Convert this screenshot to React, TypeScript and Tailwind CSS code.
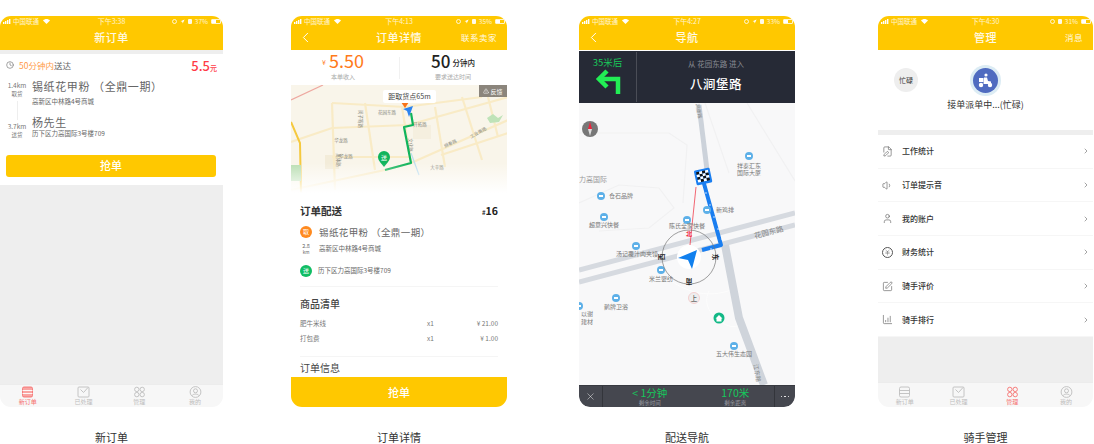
import { ChevronLeft, ChevronRight, FilePen, Volume1, User, JapaneseYen, SquarePen, ChartColumnIncreasing, X, Navigation, TriangleAlert, Clock } from 'lucide-react';

const FONT = { fontFamily: '"Noto Sans CJK SC", "Liberation Sans", sans-serif' };

function StatusBar({ time, battery, nav = true }: { time: string; battery: string; nav?: boolean }) {
  return (
    <div className="relative flex items-center justify-between h-[11px] pl-[3px] pr-[2px] text-[6.5px] leading-none text-white/80">
      <div className="flex items-center gap-[2px]">
        <svg width="8" height="5" viewBox="0 0 8 5" fill="#fff">
          <rect x="0" y="3" width="1.4" height="2" />
          <rect x="2" y="2" width="1.4" height="3" />
          <rect x="4" y="1" width="1.4" height="4" />
          <rect x="6" y="0" width="1.4" height="5" />
        </svg>
        <span>中国联通</span>
        <svg width="7" height="5" viewBox="0 0 7 5" className="ml-[2px]" fill="#fff">
          <path d="M0 1.6C2 -.4 5 -.4 7 1.6L3.5 5z" />
        </svg>
      </div>
      <span className="absolute left-0 right-0 text-center text-[7px]">{time}</span>
      <div className="flex items-center gap-[3px]">
        <span className="w-[5px] h-[5px] rounded-full border border-white/80" />
        {nav && <Navigation size={5} fill="#fff" strokeWidth={0} />}
        <span className="w-[4px] h-[5px] rounded-[1px] bg-white/90" />
        <span>{battery}</span>
        <span className="w-[10px] h-[5px] border-[0.5px] border-white/80 rounded-[1px] flex">
          <span className="w-[4px] bg-white" />
        </span>
      </div>
    </div>
  );
}

function Header({ title, left, right, time, battery }: { title: string; left?: boolean; right?: string; time: string; battery: string }) {
  return (
    <div className="relative shrink-0 bg-[#ffc800] h-[34px]">
      <StatusBar time={time} battery={battery} nav={title !== '管理'} />
      <div className="relative flex items-center justify-center h-[21px] text-[11px] font-medium text-white/90 tracking-[0.5px]">
        {left && <ChevronLeft size={17} strokeWidth={1.4} className="absolute left-[6px] text-white" />}
        {title}
        {right && <span className="absolute right-[10px] text-[8.5px] font-normal">{right}</span>}
      </div>
    </div>
  );
}

function TabBar({ active, className }: { active: number; className: string }) {
  const tabs = ['新订单', '已处理', '管理', '我的'];
  return (
    <div className={`shrink-0 bg-[#f7f7f7] border-t border-[#ececec] grid grid-cols-4 ${className}`}>
      {tabs.map((t, i) => {
        const c = i === active ? '#f6716f' : '#bdbdbd';
        return (
          <div key={t} className="flex flex-col items-center justify-end pb-[1px]" style={{ color: c }}>
            <svg width="13" height="12" viewBox="0 0 13 12" fill="none" stroke={c} strokeWidth="0.9">
              {i === 0 && (
                <>
                  <rect x="1.5" y="1" width="10" height="10" rx="1.5" fill={active === 0 ? '#f9a5a3' : 'none'} />
                  <path d="M1.5 4.5h10M1.5 7.5h10" stroke={active === 0 ? '#fff' : c} />
                </>
              )}
              {i === 1 && (
                <>
                  <rect x="1" y="1" width="11" height="10" rx="1" />
                  <path d="M3.5 3.5 6.5 6.5 11 1.5" />
                </>
              )}
              {i === 2 && (
                <>
                  <circle cx="3.8" cy="3.4" r="2.2" />
                  <circle cx="9.2" cy="3.4" r="2.2" />
                  <circle cx="3.8" cy="8.6" r="2.2" />
                  <circle cx="9.2" cy="8.6" r="2.2" />
                </>
              )}
              {i === 3 && (
                <>
                  <circle cx="6.5" cy="6" r="5.4" />
                  <circle cx="6.5" cy="4.8" r="2" />
                  <path d="M3 9.6c1-2 6-2 7 0" />
                </>
              )}
            </svg>
            <span className="text-[6px] leading-[8px]">{t}</span>
          </div>
        );
      })}
    </div>
  );
}

function Phone({ children, caption, width, className = '' }: { children: React.ReactNode; caption: string; width: string; className?: string }) {
  return (
    <div className={`shrink-0 flex flex-col ${width} ${className}`}>
      <div className="shrink-0 h-[391px] rounded-[11px] overflow-hidden flex flex-col bg-white relative">{children}</div>
      <div className="shrink-0 mt-[24px] text-center text-[11px] leading-[13px] text-[#333]">{caption}</div>
    </div>
  );
}

function NewOrder() {
  return (
    <>
      <Header title="新订单" time="下午3:38" battery="37%" />
      <div className="h-[4px] bg-[#eeeeee]" />
      <div className="h-[131px] px-[6px] pt-[2px]">
        <div className="flex items-center justify-between h-[18px]">
          <div className="flex items-center text-[8.5px] text-[#666]">
            <Clock size={8} className="mr-[5px] text-[#777]" />
            <span className="text-[#ff9a4a]">50分钟内</span>送达
          </div>
          <div className="text-[#ff3b47] text-[13px] leading-none font-medium">
            5.5<span className="text-[7px]">元</span>
          </div>
        </div>
        <div className="flex mt-[5px]">
          <div className="w-[26px] -ml-[2px] flex flex-col items-center text-[6.5px] leading-[9px] text-[#777] pt-[1.5px]">
            <span>1.4km</span>
            <span className="text-[5.5px]">取货</span>
            <span className="w-px h-[19px] bg-[#eeeeee] my-[2px]" />
            <span>3.7km</span>
            <span className="text-[5.5px]">送货</span>
          </div>
          <div className="ml-[2px] text-[#666]">
            <div className="text-[11px] leading-[15px] tracking-[0.6px]">锡纸花甲粉 （全鼎一期）</div>
            <div className="text-[6.5px] leading-[10px] mt-[2px]">高新区中林路4号商城</div>
            <div className="text-[11px] leading-[15px] mt-[8.5px] tracking-[0.6px]">杨先生</div>
            <div className="text-[6.5px] leading-[9px] -mt-[1px]">历下区力高国际3号楼709</div>
          </div>
        </div>
        <button className="block w-[210px] h-[22px] mt-[15px] rounded-[3px] bg-[#ffc800] text-white text-[11px] font-medium">抢单</button>
      </div>
      <div className="flex-1 bg-[#eeeeee]" />
      <TabBar active={0} className="h-[23px]" />
    </>
  );
}

function CityMap() {
  const roads = [
    'M0 57 41 43 117 40 217 12',
    'M0 105 94 85 120 78 217 35',
    'M41 18 114 22 191 12',
    'M41 18 44 105',
    'M74 18 84 85',
    'M111 22 120 78',
    'M144 22 154 82',
    'M171 12 191 75',
    'M197 12 207 52',
    'M41 72 120 72',
    'M150 70 217 48',
  ];
  const labels: [string, number, number, number][] = [
    ['花园东路', 96, 29, 0],
    ['华龙路', 55, 73, 0],
    ['华龙路', 50, 57, 0],
    ['大辛路', 146, 84, 0],
    ['工业南路', 188, 49, -30],
    ['开拓路', 129, 41, 0],
    ['舜泰路', 160, 60, -25],
    ['闵子骞路', 68, 34, 90],
    ['文化路', 118, 60, 90],
    ['奥体路', 46, 75, 90],
  ];
  return (
    <svg className="absolute inset-0" width="216" height="108" viewBox="0 0 216 108">
      <defs>
        <linearGradient id="fade" x1="0" y1="0" x2="0" y2="1">
          <stop offset="0" stopColor="#fff" stopOpacity="0" />
          <stop offset="1" stopColor="#fff" />
        </linearGradient>
      </defs>
      <rect width="216" height="108" fill="#f9f5ea" />
      <rect x="34" y="70" width="14" height="14" fill="#f3ecd9" />
      <rect x="122" y="40" width="18" height="14" fill="#f5efdf" />
      {roads.map((d, i) => (
        <path key={i} d={d} fill="none" stroke="#f9ebc6" strokeWidth="2.2" />
      ))}
      <path d="M0 15 32 0" stroke="#eea8a0" strokeWidth="1.2" />
      <path d="M0 37 9 58 10 108" fill="none" stroke="#f5c93f" strokeWidth="2" />
      <path d="M120 68 128 90" fill="none" stroke="#bcdcee" strokeWidth="1.2" />
      <path d="M196 33 202 29 207 33 212 30 208 37 199 38z" fill="#bfe3b8" />
      <rect x="0" y="80" width="10" height="16" fill="#b9deb2" />
      {labels.map(([t, x, y, r], i) => (
        <text key={i} x={x} y={y} fontSize="4.5" fill="#8a8a80" textAnchor="middle" transform={`rotate(${r} ${x} ${y})`}>
          {t}
        </text>
      ))}
      <path d="M120 28 122 40 113 42 120 78 94 85" fill="none" stroke="#10b45c" strokeWidth="2.2" strokeLinejoin="round" />
      <path d="M110 17 118 17 114 23z" fill="#f97316" />
      <path d="M112 24 122 21 118 32 116 26z" fill="#2c83ef" />
      <path d="M93 82c-4-5-6-7-6-10a6 6 0 0 1 12 0c0 3-2 5-6 10z" fill="#10b45c" />
      <text x="93" y="75" fontSize="6" fill="#fff" textAnchor="middle">送</text>
      <rect y="78" width="216" height="30" fill="url(#fade)" />
    </svg>
  );
}

function OrderDetail() {
  return (
    <>
      <Header title="订单详情" left right="联系卖家" time="下午4:13" battery="35%" />
      <div className="h-[35px] grid grid-cols-2 shrink-0 items-center relative">
        <div className="flex flex-col items-center -mt-[5px] pr-[4px]">
          <div className="text-[#ff7a1a] text-[18px] leading-[21px]">
            <span className="text-[7px] mr-[3px] align-[3px]">¥</span>5.50
          </div>
          <div className="text-[6px] leading-[7px] text-[#aaa]">本单收入</div>
        </div>
        <div className="flex flex-col items-center -mt-[5px]">
          <div className="text-[#222] text-[17px] leading-[21px] font-medium">
            50<span className="text-[7.5px] ml-[2px] align-[2px]">分钟内</span>
          </div>
          <div className="text-[6px] leading-[7px] text-[#aaa]">要求送达时间</div>
        </div>
        <div className="absolute left-[108px] top-[7px] h-[22px] w-px bg-[#f1f1f1]" />
      </div>
      <div className="relative h-[108px] shrink-0">
        <CityMap />
        <div className="absolute left-[92px] top-[5px] w-[53px] h-[13px] rounded-[2px] bg-white text-[#444] text-[7px] leading-[13px] text-center">距取货点65m</div>
        <div className="absolute right-0 top-0 w-[28px] h-[12px] bg-[#8b857c] text-white text-[6px] flex items-center justify-center gap-[1px]">
          <TriangleAlert size={6} />反馈
        </div>
      </div>
      <div className="px-[9px] pt-[10px] flex-1 min-h-0 overflow-hidden">
        <div className="flex justify-between items-center h-[16px] text-[10.5px] font-bold text-[#333]">
          <span>订单配送</span>
          <span className="text-[#222]"><span className="text-[6px]">#</span>16</span>
        </div>
        <div className="flex items-center h-[14px] mt-[6px] text-[9.5px] text-[#666]">
          <span className="w-[12px] h-[12px] rounded-full bg-[#ff8a1f] text-white text-[6px] leading-[12px] text-center mr-[7px]">取</span>
          <span className="tracking-[0.4px]">锡纸花甲粉 （全鼎一期）</span>
        </div>
        <div className="flex items-center h-[14px] mt-[3px] text-[6.5px] text-[#666]">
          <span className="w-[12px] mr-[7px] flex flex-col text-[5.5px] leading-[6px] text-center">
            <span>2.8</span>
            <span className="text-[4.5px]">km</span>
          </span>
          高新区中林路4号商城
        </div>
        <div className="flex items-center h-[12px] mt-[9px] text-[6.5px] text-[#666]">
          <span className="w-[12px] h-[12px] rounded-full bg-[#10bd64] text-white text-[6px] leading-[12px] text-center mr-[6px]">送</span>
          历下区力高国际3号楼709
        </div>
        <div className="h-px bg-[#f5f5f5] mt-[9px]" />
        <div className="text-[10px] font-medium text-[#444] leading-[14px] mt-[10px]">商品清单</div>
        <div className="flex items-center h-[15px] mt-[5px] text-[6.5px] text-[#777]">
          <span className="flex-1">肥牛米线</span>
          <span className="w-[47px]">x1</span>
          <span className="w-[24px] text-right">¥ 21.00</span>
        </div>
        <div className="flex items-center h-[15px] text-[6.5px] text-[#777]">
          <span className="flex-1">打包费</span>
          <span className="w-[47px]">x1</span>
          <span className="w-[24px] text-right">¥ 1.00</span>
        </div>
        <div className="h-px bg-[#f5f5f5] mt-[10px]" />
        <div className="text-[10px] text-[#444] leading-[14px] mt-[4px]">订单信息</div>
      </div>
      <div className="h-[30px] shrink-0 bg-[#ffc800] text-white text-[11px] font-medium flex items-center justify-center">抢单</div>
    </>
  );
}

function NavMap() {
  const pois: [number, number][] = [
    [170, 53], [22, 93], [25, 114], [128, 107], [108, 117], [57, 143], [82, 167], [37, 195], [0, 203], [155, 243],
  ];
  const labels: [string, number, number][] = [
    ['祥泰汇东', 170, 65], ['国际大厦', 170, 72], ['仓石品牌', 42, 95], ['超意兴快餐', 25, 124], ['新鸡排', 146, 109],
    ['陈氏全家快餐', 108, 125], ['汤记覆汁肉夹馍', 58, 153], ['米兰婴纺', 82, 178], ['鹊牌卫浴', 37, 206], ['以谢', 8, 213],
    ['建材', 8, 221], ['五大伟生态园', 155, 253],
  ];
  const dots = [[127, 90], [131, 102], [135, 114], [139, 126], [143, 136], [132, 146]];
  return (
    <svg className="absolute inset-0" width="216" height="282" viewBox="0 0 216 282">
      <rect width="216" height="282" fill="#f8f8f9" />
      <path d="M0 30H90L108 42 104 100M0 100 40 82 80 85 95 105 70 125 20 128M168 0 216 78M126 0 150 70" fill="none" stroke="#f1f1f2" strokeWidth="1.2" />
      <path d="M92 178C110 190 130 195 152 187M130 188C125 198 128 208 140 218 150 224 155 225 160 222" fill="none" stroke="#fdfdfd" strokeWidth="1" />
      <path d="M0 167 216 110M0 179 216 122" stroke="#d6dae0" strokeWidth="5" fill="none" />
      <path d="M120 2 128 67" stroke="#ccd2da" strokeWidth="5" fill="none" />
      <path d="M146 142 160 215 185 282" stroke="#cfd4db" strokeWidth="8" fill="none" />
      <path d="M124 77 142 142 123 147" stroke="#1a7ef0" strokeWidth="4" fill="none" strokeLinejoin="round" />
      {dots.map(([x, y]) => (
        <circle key={x} cx={x} cy={y} r="0.7" fill="#fff" />
      ))}
      <path d="M117 84 111 142" stroke="#f0404f" strokeWidth="0.8" />
      <rect x="116" y="66" width="16" height="15" rx="1.5" fill="#1a7ef0" transform="rotate(-12 124 73)" />
      <g transform="rotate(-12 124 73)">
        {[0, 1, 2, 3].map(r =>
          [0, 1, 2, 3].map(c => (
            <rect key={`${r}-${c}`} x={118 + c * 3} y={68 + r * 2.6} width="3" height="2.6" fill={(r + c) % 2 ? '#fff' : '#111'} />
          ))
        )}
      </g>
      {pois.map(([x, y]) => (
        <g key={`${x}-${y}`}>
          <circle cx={x} cy={y} r="4" fill="#5db0e8" />
          <rect x={x - 2} y={y - 1} width="4" height="2" fill="#fff" />
        </g>
      ))}
      {labels.map(([t, x, y]) => (
        <text key={t} x={x} y={y} fontSize="6" fill="#777" textAnchor="middle">{t}</text>
      ))}
      <text x="14" y="79" fontSize="7" fill="#999" textAnchor="middle">力高国际</text>
      <text x="190" y="132" fontSize="7.5" fill="#888" textAnchor="middle" transform="rotate(-15 190 130)">花园东路</text>
      <text x="120" y="10" fontSize="5" fill="#888" textAnchor="middle" transform="rotate(80 120 8)">涧堡路</text>
      <text x="178" y="272" fontSize="6" fill="#888" textAnchor="middle" transform="rotate(80 178 270)">江东路</text>
      <circle cx="110" cy="154" r="27" fill="none" stroke="#777" strokeWidth="0.7" />
      <circle cx="110" cy="154" r="12" fill="#fff" />
      <path d="M99 155 118 147 113 166 109 157z" fill="#1180ee" />
      <text x="110" y="133" fontSize="6" fontWeight="700" fill="#f02c46" textAnchor="middle">北</text>
      <text x="136" y="156" fontSize="6.5" fontWeight="700" fill="#222" textAnchor="middle" transform="rotate(90 136 154)">东</text>
      <text x="110" y="180" fontSize="6.5" fontWeight="700" fill="#222" textAnchor="middle" transform="rotate(180 110 178)">南</text>
      <text x="83" y="156" fontSize="6.5" fontWeight="700" fill="#222" textAnchor="middle" transform="rotate(-90 83 154)">西</text>
      <circle cx="115" cy="195" r="5.5" fill="#eee" stroke="#f3c6c6" strokeWidth="0.8" />
      <text x="115" y="198" fontSize="6.5" fill="#333" textAnchor="middle">上</text>
      <circle cx="140" cy="215" r="5.5" fill="#12b886" />
      <path d="M136.5 215.5 140 212 143.5 215.5H142.5V218.5H137.5V215.5z" fill="#fff" />
      <circle cx="11" cy="26" r="8" fill="#777" />
      <path d="M11 19 13 26H9z" fill="#ef233c" />
      <path d="M11 33 13 26H9z" fill="#ddd" />
    </svg>
  );
}

function Navigate() {
  return (
    <>
      <Header title="导航" left time="下午4:27" battery="33%" />
      <div className="h-px bg-white/40 shrink-0" />
      <div className="h-[52px] bg-[#262a36] flex shrink-0">
        <div className="w-[58px] flex flex-col items-center pt-[3px] my-[1px] border-r border-[#4a4d57]">
          <span className="text-[#19c85a] text-[9.5px] leading-[14px]">35米后</span>
          <svg width="26" height="26" viewBox="0 0 26 26" fill="none" stroke="#22ee55" strokeWidth="4.5">
            <path d="M23 25V10H6" />
            <path d="M12 2 4 10 12 18" />
          </svg>
        </div>
        <div className="flex-1 flex flex-col items-center">
          <span className="text-[#8a8c94] text-[7.5px] leading-[11px] mt-[7px]">从 花园东路 进入</span>
          <span className="text-white text-[12.5px] font-medium leading-[18px] mt-[6px] tracking-[0.5px]">八涧堡路</span>
        </div>
      </div>
      <div className="relative flex-1">
        <NavMap />
      </div>
      <div className="h-[22px] shrink-0 bg-[#45474f] border-t border-[#383a41] rounded-b-[11px] flex items-stretch text-[#9a9ca3]">
        <div className="w-[24px] flex items-center justify-center border-r border-[#33353b]">
          <X size={11} strokeWidth={1} className="text-white" />
        </div>
        <div className="flex-1 grid grid-cols-2">
          <div className="flex flex-col items-center pl-[8px]">
            <span className="text-[#15c95c] text-[10.5px] leading-[13px]">&lt; 1分钟</span>
            <span className="text-[5.5px] leading-[8px]">剩余时间</span>
          </div>
          <div className="flex flex-col items-center pl-[8px]">
            <span className="text-[#15c95c] text-[10.5px] leading-[13px]">170米</span>
            <span className="text-[5.5px] leading-[8px]">剩余距离</span>
          </div>
        </div>
        <div className="w-[21px] flex items-center justify-center gap-[2px] border-l border-[#33353b]">
          <span className="w-[1.5px] h-[1.5px] rounded-full bg-white" />
          <span className="w-[1.5px] h-[1.5px] rounded-full bg-white" />
          <span className="w-[1.5px] h-[1.5px] rounded-full bg-white" />
        </div>
      </div>
    </>
  );
}

function Manage() {
  const rows = [
    { icon: FilePen, label: '工作统计' },
    { icon: Volume1, label: '订单提示音' },
    { icon: User, label: '我的账户' },
    { icon: JapaneseYen, label: '财务统计', ring: true },
    { icon: SquarePen, label: '骑手评价' },
    { icon: ChartColumnIncreasing, label: '骑手排行' },
  ];
  return (
    <>
      <Header title="管理" right="消息" time="下午4:30" battery="31%" />
      <div className="h-[80px] shrink-0 relative">
        <div className="absolute left-[16px] top-[18px] w-[24px] h-[24px] rounded-full bg-[#eeeeee] text-[#333] text-[7px] leading-[24px] text-center">忙碌</div>
        <div className="absolute left-[92px] top-[15px] w-[31px] h-[31px] rounded-full bg-[#dcecf4] flex items-center justify-center">
          <div className="w-[25px] h-[25px] rounded-full bg-[#4f6bc0] flex items-center justify-center">
            <svg width="17" height="15" viewBox="0 0 17 15" fill="#fff">
              <circle cx="9" cy="2" r="1.6" />
              <path d="M7 4.5h3l1 3.5 3 .5v2.5H6.5z" />
              <rect x="2" y="5" width="4.5" height="4" />
              <circle cx="4" cy="12" r="2.2" />
              <circle cx="13" cy="12" r="2.2" />
            </svg>
          </div>
        </div>
        <div className="absolute left-0 right-0 top-[48px] text-center text-[9px] leading-[14px] text-[#333]">接单派单中...(忙碌)</div>
      </div>
      <div className="h-[5px] bg-[#eeeeee] shrink-0" />
      {rows.map(r => (
        <div key={r.label} className="h-[33.7px] shrink-0 flex items-center pl-[4px] pr-[3px] border-b border-[#f6f6f6] text-[8px] text-[#333] font-medium">
          <span className={`w-[11px] h-[11px] flex items-center justify-center mr-[9px] ${r.ring ? 'rounded-full border-[0.7px] border-[#555]' : ''}`}>
            <r.icon size={r.ring ? 7 : 11} strokeWidth={1.3} className="text-[#555]" />
          </span>
          <span className="flex-1">{r.label}</span>
          <ChevronRight size={8} strokeWidth={1.8} className="text-[#666]" />
        </div>
      ))}
      <div className="flex-1 bg-[#eeeeee]" />
      <TabBar active={2} className="h-[25px]" />
    </>
  );
}

export default function App() {
  return (
    <div className="w-[1094px] h-[444px] bg-white overflow-hidden flex pt-4" style={FONT}>
      <Phone caption="新订单" width="w-[223px]"><NewOrder /></Phone>
      <Phone caption="订单详情" width="w-[216px]" className="ml-[68px]"><OrderDetail /></Phone>
      <Phone caption="配送导航" width="w-[216px]" className="ml-[72px]"><Navigate /></Phone>
      <Phone caption="骑手管理" width="w-[215px]" className="ml-[83px]"><Manage /></Phone>
    </div>
  );
}
